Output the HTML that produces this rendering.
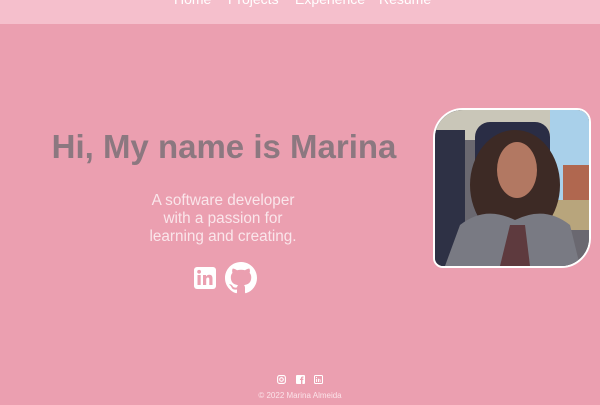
<!DOCTYPE html>
<html><head><meta charset="utf-8"><style>
html,body{margin:0;padding:0;}
body{width:600px;height:405px;background:#eb9fb0;position:relative;overflow:hidden;font-family:"Liberation Sans",sans-serif;}
.nav{position:absolute;left:0;top:0;width:600px;height:24px;background:#f5bfcc;}
.nav span{position:absolute;top:-9px;font-size:14px;color:#fff;}
h1{position:absolute;left:0;top:128px;width:448px;margin:0;text-align:center;font-size:33px;font-weight:bold;color:#8c7880;}
.sub{position:absolute;left:123px;width:200px;top:192px;text-align:center;font-size:15.3px;line-height:18px;color:#fae6eb;}
.photo{position:absolute;left:433px;top:108px;width:154px;height:156px;border:2px solid #fff;border-radius:30px 14px 30px 10px;overflow:hidden;background:#555;}
.foot{position:absolute;top:391px;left:0;width:600px;text-align:center;font-size:8px;color:#fbe3e9;}
</style></head><body>
<div class="nav"><span style="left:174px">Home</span><span style="left:228px">Projects</span><span style="left:295px">Experience</span><span style="left:379px">Resume</span></div>
<h1>Hi, My name is Marina</h1>
<div class="sub">A software developer<br>with a passion for<br>learning and creating.</div>
<svg style="position:absolute;left:193px;top:266px" width="24" height="24" viewBox="0 0 24 24"><rect x="1" y="1" width="22" height="22" rx="3" fill="#fff"/><rect x="4.5" y="9" width="3.2" height="10" fill="#eb9fb0"/><circle cx="6.1" cy="5.8" r="1.9" fill="#eb9fb0"/><path d="M10 9h3v1.5c.6-1 1.8-1.8 3.3-1.8 2.6 0 3.2 1.7 3.2 4V19h-3.2v-5.5c0-1.2-.3-2-1.4-2-1.2 0-1.7.9-1.7 2V19H10z" fill="#eb9fb0"/></svg>
<svg style="position:absolute;left:225px;top:262px" width="32" height="32" viewBox="0 0 16 16"><path fill="#fff" d="M8 0C3.58 0 0 3.58 0 8c0 3.54 2.290 6.53 5.47 7.59.4.07.55-.17.55-.38 0-.19-.01-.82-.01-1.49-2.010.37-2.530-.49-2.690-.94-.09-.23-.48-.94-.82-1.130-.28-.15-.68-.52-.01-.53.63-.01 1.080.58 1.230.82.72 1.210 1.870.87 2.330.66.07-.52.28-.87.51-1.07-1.78-.2-3.64-.89-3.64-3.95 0-.87.31-1.59.82-2.15-.08-.2-.36-1.02.08-2.12 0 0 .67-.21 2.2.82.64-.18 1.32-.27 2-.27.68 0 1.36.09 2 .27 1.53-1.04 2.2-.82 2.2-.82.44 1.1.16 1.92.08 2.12.51.56.82 1.27.82 2.15 0 3.07-1.87 3.75-3.65 3.95.29.25.54.73.54 1.48 0 1.07-.01 1.93-.01 2.2 0 .21.15.46.55.38A8.013 8.013 0 0016 8c0-4.42-3.58-8-8-8z"/></svg>
<div class="photo"><svg width="154" height="156" viewBox="0 0 154 156">
<rect width="154" height="156" fill="#6a6870"/>
<rect x="0" y="0" width="154" height="30" fill="#c9c6b8"/>
<rect x="115" y="0" width="39" height="120" fill="#a9d0ea"/>
<rect x="128" y="55" width="26" height="40" fill="#b0674f"/>
<rect x="115" y="90" width="39" height="30" fill="#b8a57c"/>
<rect x="0" y="20" width="30" height="136" fill="#2e3145"/>
<rect x="40" y="12" width="75" height="100" rx="15" fill="#2a2d45"/>
<ellipse cx="80" cy="75" rx="45" ry="55" fill="#3d2a25"/>
<ellipse cx="82" cy="60" rx="20" ry="28" fill="#b27862"/>
<path d="M10 156 L25 115 Q50 95 80 110 Q110 95 135 115 L145 156Z" fill="#797a83"/>
<path d="M65 156 L75 115 L90 115 L95 156Z" fill="#5e3a3e"/>
</svg></div>
<svg style="position:absolute;left:277px;top:375px" width="9" height="9" viewBox="0 0 9 9"><rect x=".6" y=".6" width="7.8" height="7.8" rx="2" fill="none" stroke="#fff" stroke-width="1.1"/><circle cx="4.5" cy="4.5" r="1.8" fill="none" stroke="#fff" stroke-width="1.1"/></svg>
<svg style="position:absolute;left:296px;top:375px" width="9" height="9" viewBox="0 0 9 9"><rect width="9" height="9" rx="1" fill="#fff"/><path d="M5 9V5H4V3.8h1V3c0-1 .6-1.5 1.5-1.5H7.5v1.1H7c-.4 0-.6.2-.6.6v.6h1.1L7.3 5H6.4v4z" fill="#eb9fb0"/></svg>
<svg style="position:absolute;left:314px;top:375px" width="9" height="9" viewBox="0 0 9 9"><rect x=".5" y=".5" width="8" height="8" rx="1" fill="none" stroke="#fff"/><rect x="2" y="3.8" width="1" height="3.2" fill="#fff"/><rect x="2" y="2" width="1" height="1" fill="#fff"/><path d="M4 3.8h1v3.2H4zM5 4.5h1.5v2.5H5.8V5H5z" fill="#fff"/></svg>
<div class="foot">© 2022 Marina Almeida</div>
</body></html>
